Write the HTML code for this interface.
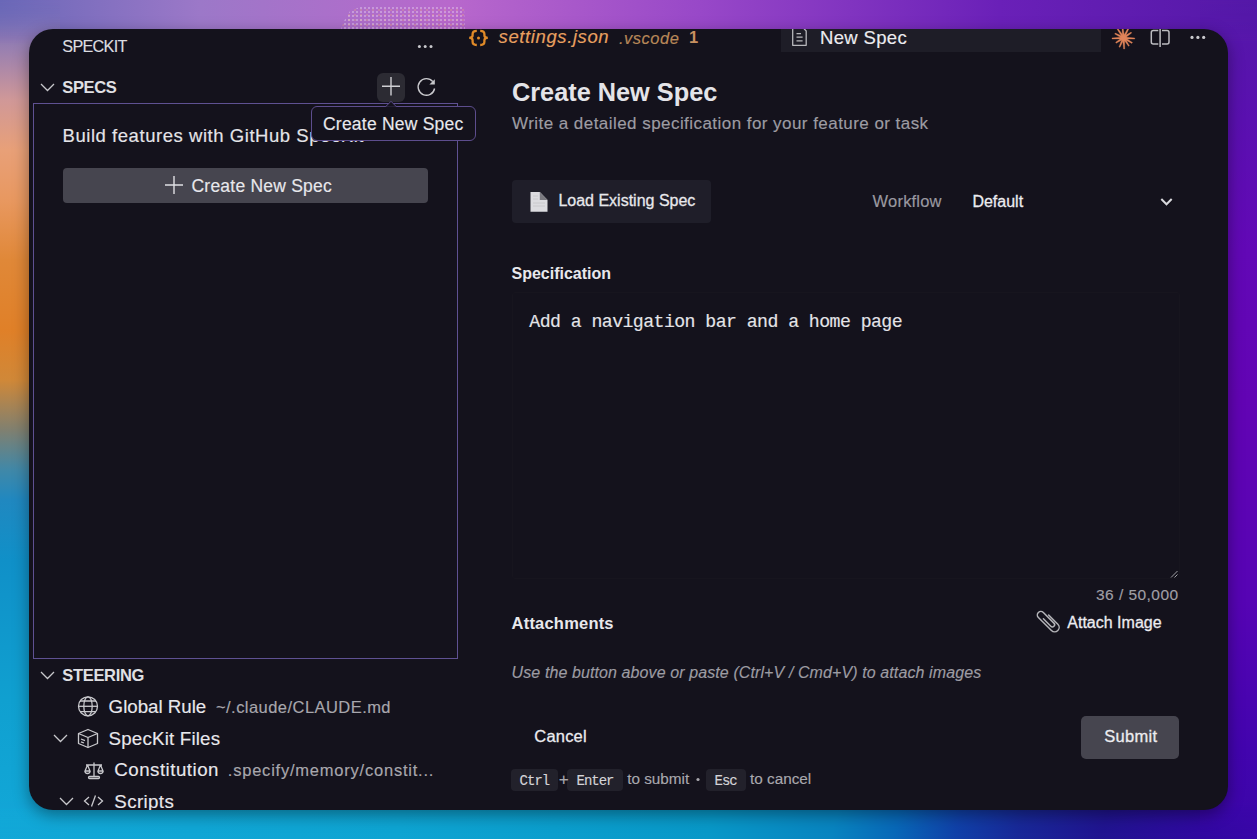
<!DOCTYPE html>
<html><head><meta charset="utf-8">
<style>
*{margin:0;padding:0;box-sizing:border-box}
html,body{width:1257px;height:839px;overflow:hidden}
body{position:relative;font-family:"Liberation Sans",sans-serif;background:#10a8d8}
#bg{position:absolute;left:0;top:0;width:1257px;height:839px;background:#7030b8}
.st{position:absolute}
#sl{left:0;top:0;width:60px;height:839px;-webkit-mask-image:linear-gradient(180deg,rgba(0,0,0,0) 0,#000 45px,#000 800px,rgba(0,0,0,0) 839px);background:linear-gradient(180deg,#6a68b8 0px,#9a80b0 50px,#d09898 100px,#e8a078 150px,#e89860 200px,#e08838 260px,#e08028 330px,#d08838 380px,#808070 430px,#4088a8 470px,#2088c0 500px,#1090c8 560px,#10a0d0 700px,#12a8d8 839px)}
#stp{left:0;top:0;width:1257px;height:70px;-webkit-mask-image:linear-gradient(180deg,#000 0,#000 29px,rgba(0,0,0,0) 70px);mask-image:linear-gradient(180deg,#000 0,#000 29px,rgba(0,0,0,0) 70px);background:linear-gradient(90deg,#6a68b8 0px,#9c78c8 200px,#b868cc 450px,#9848c8 700px,#6a20b8 1000px,#5418a8 1257px)}
#sb{left:0;top:770px;width:1257px;height:69px;-webkit-mask-image:linear-gradient(0deg,#000 0,#000 30px,rgba(0,0,0,0) 69px);mask-image:linear-gradient(0deg,#000 0,#000 30px,rgba(0,0,0,0) 69px);background:linear-gradient(105deg,#12a8d8 0px,#0ea4d2 400px,#0898c8 700px,#0884c0 820px,#0868b8 880px,#1040a8 940px,#182898 1000px,#201490 1080px,#3008a0 1180px,#3e06ac 1257px)}
#sr{left:1200px;top:0;width:57px;height:839px;-webkit-mask-image:linear-gradient(180deg,rgba(0,0,0,0) 0,#000 45px,#000 800px,rgba(0,0,0,0) 839px);background:linear-gradient(180deg,#5418a8 0px,#5a10b0 120px,#6208b6 250px,#6204b4 400px,#5604b4 600px,#4204ae 750px,#3a06a8 839px)}
#noise{position:absolute;left:340px;top:7px;width:125px;height:22px;clip-path:polygon(1px 22px,4px 14px,10px 4px,20px 0,124px 0,125px 22px);
background:radial-gradient(circle at 1px 1px, rgba(255,255,255,0.3) 0 0.8px, rgba(255,255,255,0) 1.1px) 0 0/4px 4px, radial-gradient(circle at 1px 1px, rgba(240,170,120,0.3) 0 0.8px, rgba(255,255,255,0) 1.1px) 2px 2px/6px 5px;}
#panel{position:absolute;left:29px;top:29px;width:1199px;height:781px;border-radius:24px;background:#14121c;overflow:hidden;
 box-shadow:0 5px 16px rgba(0,0,0,0.38)}
.a{position:absolute;white-space:pre;line-height:1;-webkit-text-stroke:0.15px currentColor}
.md{-webkit-text-stroke:0.28px currentColor}
.b0{-webkit-text-stroke:0px}
.s{font-family:"Liberation Sans",sans-serif}
.m{font-family:"Liberation Mono",monospace}
svg{position:absolute;overflow:visible}
</style></head>
<body>
<div id="bg"></div>
<div id="stp" class="st"></div><div id="sb" class="st"></div><div id="sl" class="st"></div><div id="sr" class="st"></div>
<div id="noise"></div>
<div id="panel">
<div id="inner" style="position:absolute;left:-29px;top:-29px;width:1257px;height:839px">
<!--SIDEBAR-->
<div class="a" style="left:62.3px;top:38.1px;font-size:16.2px;letter-spacing:-0.7px;color:#dcdce0">SPECKIT</div>
<svg style="left:0;top:0" width="1" height="1"><g fill="#c8c8cc"><circle cx="419.4" cy="46.5" r="1.5"/><circle cx="425.2" cy="46.5" r="1.5"/><circle cx="431" cy="46.5" r="1.5"/></g></svg>
<svg style="left:0;top:0" width="1" height="1"><polyline points="41,84 47.5,90.5 54,84" fill="none" stroke="#c8c8cc" stroke-width="1.3"/></svg>
<div class="a b0" style="left:62.3px;top:79.2px;font-size:16.5px;font-weight:bold;letter-spacing:-0.35px;color:#e0e0e4">SPECS</div>
<div style="position:absolute;left:377px;top:73px;width:28px;height:29px;border-radius:6px;background:#2c2b33"></div>
<svg style="left:0;top:0" width="1" height="1"><g stroke="#d0d0d4" stroke-width="1.4"><line x1="382" y1="86.3" x2="400" y2="86.3"/><line x1="391" y1="77" x2="391" y2="95.5"/></g></svg>
<svg style="left:0;top:0" width="1" height="1"><path d="M432.8,81.6 A8.3,8.3 0 1 0 434.6,88.5" fill="none" stroke="#c8c8cc" stroke-width="1.4"/><path d="M434.8,79.2 L434.8,84.6 L429.4,84.6 Z" fill="#c8c8cc"/></svg>
<div style="position:absolute;left:33px;top:103px;width:425px;height:556px;border:1px solid #5f5192"></div>
<div class="a" style="left:62.5px;top:126.5px;font-size:18.5px;letter-spacing:0.55px;color:#e4e4e8">Build features with GitHub SpecKit</div>
<div style="position:absolute;left:63px;top:168px;width:365px;height:35px;border-radius:4px;background:#46454f"></div>
<svg style="left:0;top:0" width="1" height="1"><g stroke="#e0e0e4" stroke-width="1.4"><line x1="165" y1="185" x2="183" y2="185"/><line x1="174" y1="176" x2="174" y2="194"/></g></svg>
<div class="a" style="left:191.5px;top:178.1px;font-size:17.5px;letter-spacing:0.22px;color:#e8e8ec">Create New Spec</div>
<div style="position:absolute;left:311px;top:106px;width:165px;height:35px;border-radius:6px;border:1px solid #5d4d8d;background:#14121c"></div>
<svg style="left:0;top:0" width="1" height="1"><path d="M385.5,106.8 L391,101.3 L396.5,106.8" fill="#14121c" stroke="#5d4d8d" stroke-width="1"/></svg>
<div class="a" style="left:323px;top:116.3px;font-size:17.5px;letter-spacing:0.22px;color:#e8e8ec">Create New Spec</div>

<svg style="left:0;top:0" width="1" height="1"><polyline points="41,672 47.5,678.5 54,672" fill="none" stroke="#c8c8cc" stroke-width="1.3"/></svg>
<div class="a b0" style="left:62.2px;top:666.8px;font-size:16.5px;font-weight:bold;letter-spacing:-0.3px;color:#e0e0e4">STEERING</div>

<svg style="left:0;top:0" width="1" height="1"><g fill="none" stroke="#c8c8cc" stroke-width="1.3"><circle cx="88" cy="706.3" r="9.5"/><ellipse cx="88" cy="706.3" rx="4.2" ry="9.5"/><line x1="78.5" y1="706.3" x2="97.5" y2="706.3"/><path d="M80,701 H96 M80,711.6 H96"/></g></svg>
<div class="a" style="left:108.6px;top:698.1px;font-size:18.7px;color:#e8e8ec">Global Rule</div>
<div class="a" style="left:216px;top:699.2px;font-size:16.5px;letter-spacing:0.45px;color:#a8a7ad">~/.claude/CLAUDE.md</div>

<svg style="left:0;top:0" width="1" height="1"><polyline points="54,735 60.5,741.5 67,735" fill="none" stroke="#c8c8cc" stroke-width="1.3"/></svg>
<svg style="left:0;top:0" width="1" height="1"><g fill="none" stroke="#c8c8cc" stroke-width="1.3" stroke-linejoin="round"><path d="M88,729.5 L97.5,733.5 L97.5,743.5 L88,747.5 L78.5,743.5 L78.5,733.5 Z"/><path d="M78.5,733.5 L88,737.5 L97.5,733.5 M88,737.5 L88,747.5"/><path d="M81,739 L85,740.6 M81,741.8 L84,743"/></g></svg>
<div class="a" style="left:108.6px;top:730.1px;font-size:18.7px;letter-spacing:0.2px;color:#e8e8ec">SpecKit Files</div>

<svg style="left:0;top:0" width="1" height="1"><g fill="none" stroke="#c8c8cc" stroke-width="1.3" stroke-linejoin="round"><path d="M94,762.5 V776 M86,765 H102 M87.5,765 L85,771 H90 Z M100.5,765 L98,771 H103 Z M89.5,776.5 H98.5 A1,1 0 0 1 98.5,778.5 H89.5 A1,1 0 0 1 89.5,776.5 Z"/><path d="M85,771 A2.5,2.5 0 0 0 90,771 M98,771 A2.5,2.5 0 0 0 103,771"/></g></svg>
<div class="a" style="left:114.3px;top:761.1px;font-size:18.7px;letter-spacing:0.5px;color:#e8e8ec">Constitution</div>
<div class="a" style="left:227.8px;top:762.2px;font-size:16.5px;letter-spacing:0.78px;color:#a8a7ad">.specify/memory/constit...</div>

<svg style="left:0;top:0" width="1" height="1"><polyline points="60,798 66.5,804.5 73,798" fill="none" stroke="#c8c8cc" stroke-width="1.3"/></svg>
<svg style="left:0;top:0" width="1" height="1"><g fill="none" stroke="#c8c8cc" stroke-width="1.3"><polyline points="89,797 84.5,801 89,805"/><polyline points="98,797 102.5,801 98,805"/><line x1="95.5" y1="795.5" x2="91.5" y2="806.5"/></g></svg>
<div class="a" style="left:114.3px;top:793.1px;font-size:18.7px;letter-spacing:0.4px;color:#e8e8ec">Scripts</div>

<!--EDITOR-->
<svg style="left:0;top:0" width="1" height="1"><g fill="none" stroke="#e08a28" stroke-width="2.3" stroke-linecap="butt"><path d="M476.8,30.8 Q472.6,30.8 472.6,34 V35.6 Q472.6,37.9 469.2,37.9 Q472.6,37.9 472.6,40.2 V41.8 Q472.6,45 476.8,45"/><path d="M480.2,30.8 Q484.4,30.8 484.4,34 V35.6 Q484.4,37.9 487.8,37.9 Q484.4,37.9 484.4,40.2 V41.8 Q484.4,45 480.2,45"/></g><circle cx="478.5" cy="37.9" r="1.5" fill="#e08a28"/></svg>
<div class="a" style="left:498.6px;top:28.1px;font-size:18.5px;font-style:italic;letter-spacing:0.6px;color:#e8a060">settings.json</div>
<div class="a" style="left:619px;top:29.8px;font-size:16.5px;font-style:italic;letter-spacing:0.5px;color:#b88858">.vscode</div>
<div class="a b0" style="left:689px;top:29.2px;font-size:16.5px;font-weight:bold;color:#c89060">1</div>

<div style="position:absolute;left:781px;top:20px;width:320px;height:31.6px;background:#1e1d27"></div>
<svg style="left:0;top:0" width="1" height="1"><g fill="none" stroke="#b8b8bc" stroke-width="1.3" stroke-linejoin="round"><path d="M792.7,25 V45.3 H806.2 V31 L802,26.5"/><path d="M796.5,33.6 H801 M796.5,37.2 H802.6 M796.5,40.8 H802.6"/></g></svg>
<div class="a" style="left:820px;top:28.5px;font-size:18.5px;letter-spacing:0.33px;color:#ececf0">New Spec</div>

<svg style="left:0;top:0" width="1" height="1"><g fill="#e0845a" stroke="#e0845a" stroke-width="0.3" stroke-linejoin="round"><polygon points="1125.0,38.9 1134.7,39.1 1134.8,38.0 1125.2,36.9"/><polygon points="1124.4,39.4 1131.9,43.4 1132.5,42.5 1125.4,37.7"/><polygon points="1123.6,39.6 1128.5,46.3 1129.4,45.7 1125.3,38.5"/><polygon points="1122.7,39.4 1123.6,49.0 1124.7,49.0 1124.7,39.2"/><polygon points="1122.1,38.8 1118.9,46.9 1120.0,47.3 1123.9,39.6"/><polygon points="1121.8,37.8 1115.6,42.3 1116.2,43.3 1122.9,39.5"/><polygon points="1122.0,36.9 1112.0,37.9 1112.0,39.0 1122.2,38.9"/><polygon points="1122.7,36.2 1115.2,33.1 1114.7,34.1 1121.8,38.0"/><polygon points="1123.6,36.0 1118.0,28.5 1117.1,29.2 1121.9,37.1"/><polygon points="1124.4,36.2 1123.1,27.8 1122.0,27.9 1122.4,36.4"/><polygon points="1125.2,36.9 1129.0,28.4 1128.0,27.9 1123.4,36.0"/><polygon points="1125.4,37.8 1131.7,33.0 1131.1,32.1 1124.3,36.1"/><circle cx="1123.6" cy="37.8" r="2.9"/></g></svg>
<svg style="left:0;top:0" width="1" height="1"><g fill="none" stroke="#bcbcc0" stroke-width="1.5"><path d="M1158.3,30.6 H1153.3 Q1151.3,30.6 1151.3,32.6 V42 Q1151.3,44 1153.3,44 H1158.3"/><path d="M1162,30.6 H1167 Q1169,30.6 1169,32.6 V42 Q1169,44 1167,44 H1162"/><line x1="1160.1" y1="28" x2="1160.1" y2="47"/></g></svg>
<svg style="left:0;top:0" width="1" height="1"><g fill="#c8c8cc"><circle cx="1192" cy="37.4" r="1.6"/><circle cx="1197.9" cy="37.4" r="1.6"/><circle cx="1203.7" cy="37.4" r="1.6"/></g></svg>

<div class="a b0" style="left:512px;top:80.1px;font-size:25.3px;font-weight:bold;color:#e4e4e8">Create New Spec</div>
<div class="a" style="left:512px;top:115.3px;font-size:17px;letter-spacing:0.45px;color:#9d9ca3">Write a detailed specification for your feature or task</div>

<div style="position:absolute;left:512px;top:180px;width:199px;height:43px;border-radius:4px;background:#1f1e29"></div>
<svg style="left:0;top:0" width="1" height="1"><path d="M530.5,192 H539.8 L547.5,200 V211.8 H530.5 Z" fill="#dcdce0"/><path d="M539.8,192 V200 H547.5 Z" fill="#7a7a80"/><path d="M533,196 H538 M533,199 H538 M533,203 H545 M533,206 H545" stroke="#c4c4c8" stroke-width="0.8"/></svg>
<div class="a md" style="left:558.4px;top:193.2px;font-size:16px;color:#e8e8ec">Load Existing Spec</div>
<div class="a" style="left:872.6px;top:193.0px;font-size:16.5px;letter-spacing:0.2px;color:#9a99a0">Workflow</div>
<div class="a md" style="left:972.4px;top:194.4px;font-size:16px;color:#ececf0">Default</div>
<svg style="left:0;top:0" width="1" height="1"><polyline points="1161.3,199 1166.5,204.3 1171.7,199" fill="none" stroke="#d8d8dc" stroke-width="2"/></svg>

<div style="position:absolute;left:511.5px;top:291.5px;width:668px;height:287.5px;border:1px solid #17151e;border-radius:3px;background:#14121c"></div>
<div class="a b0" style="left:511.5px;top:266.4px;font-size:16px;font-weight:bold;color:#e8e8ec">Specification</div>
<div class="a m" style="left:529.3px;top:313.4px;font-size:18.2px;letter-spacing:-0.56px;color:#e4e4e8">Add a navigation bar and a home page</div>
<svg style="left:0;top:0" width="1" height="1"><g stroke="#a0a0a4" stroke-width="1"><line x1="1171" y1="577.5" x2="1177.5" y2="571"/><line x1="1174.5" y1="577.5" x2="1177.5" y2="574.5"/></g></svg>
<div class="a" style="left:1096px;top:586.5px;font-size:15.5px;letter-spacing:0.45px;color:#a09fa5">36 / 50,000</div>

<div class="a b0" style="left:511.6px;top:615.4px;font-size:16.5px;font-weight:bold;letter-spacing:0.2px;color:#e8e8ec">Attachments</div>
<svg style="left:0;top:0" width="1" height="1"><g transform="translate(1048,622) rotate(-45)" fill="none" stroke="#b4b4b8" stroke-width="1.5" stroke-linecap="round"><path d="M-1,-5.5 V5 A2.2,2.2 0 0 0 3.4,5 V-10 A3.5,3.5 0 0 0 -3.6,-10 V8.5 A4.5,4.5 0 0 0 5.4,8.5 V-4.5"/></g></svg>
<div class="a md" style="left:1067.3px;top:615.1px;font-size:16px;color:#ececf0">Attach Image</div>
<div class="a" style="left:511.6px;top:665.2px;font-size:16px;font-style:italic;letter-spacing:0.1px;color:#9d9ca3">Use the button above or paste (Ctrl+V / Cmd+V) to attach images</div>

<div class="a md" style="left:534.3px;top:727.5px;font-size:16.5px;letter-spacing:0.2px;color:#ececf0">Cancel</div>
<div style="position:absolute;left:1081px;top:716px;width:98px;height:43px;border-radius:5px;background:#46454f"></div>
<div class="a md" style="left:1104.2px;top:728.0px;font-size:16.5px;letter-spacing:0.3px;color:#ececf0">Submit</div>

<div style="position:absolute;left:511px;top:769px;width:47px;height:21.5px;border-radius:4px;background:#22212b"></div>
<div style="position:absolute;left:567.4px;top:769px;width:55.3px;height:21.5px;border-radius:4px;background:#22212b"></div>
<div style="position:absolute;left:706px;top:769px;width:40px;height:21.5px;border-radius:4px;background:#22212b"></div>
<div class="a m" style="left:519.6px;top:774.3px;font-size:14px;letter-spacing:-1px;color:#d4d4d8">Ctrl</div>
<div class="a" style="left:558.8px;top:771px;font-size:17px;color:#a9a8ae">+</div>
<div class="a m" style="left:576.5px;top:774.3px;font-size:14px;letter-spacing:-1px;color:#d4d4d8">Enter</div>
<div class="a" style="left:627.2px;top:770.8px;font-size:15.3px;color:#a9a8ae">to submit</div>
<svg style="left:0;top:0" width="1" height="1"><circle cx="698" cy="779.5" r="1.6" fill="#a9a8ae"/></svg>
<div class="a m" style="left:714.5px;top:774.3px;font-size:14px;letter-spacing:-1px;color:#d4d4d8">Esc</div>
<div class="a" style="left:750px;top:770.8px;font-size:15.3px;color:#a9a8ae">to cancel</div>

</div>
</div>
</body></html>
